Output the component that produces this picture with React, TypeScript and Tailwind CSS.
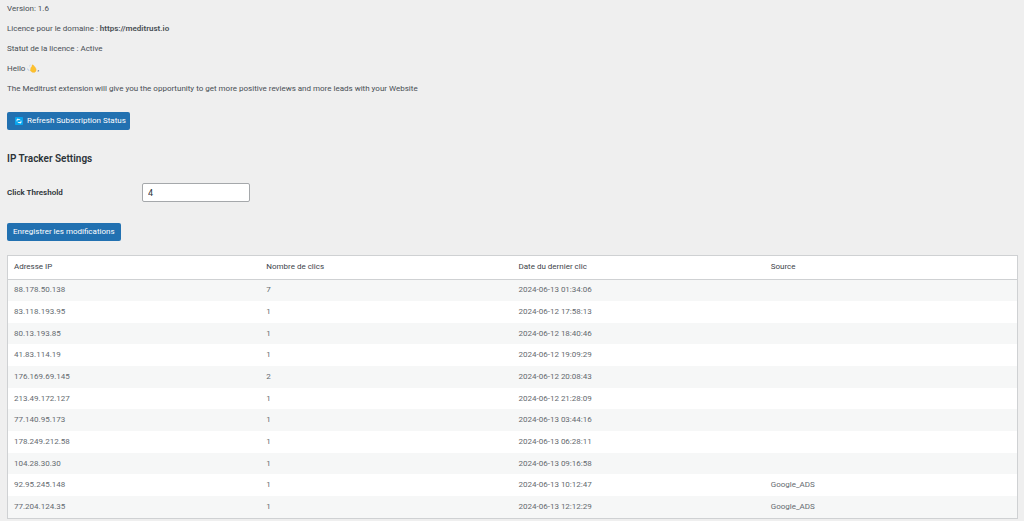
import { useState } from "react";

const clicks = [
  { ip: "88.178.50.138", count: 7, date: "2024-06-13 01:34:06", source: "" },
  { ip: "83.118.193.95", count: 1, date: "2024-06-12 17:58:13", source: "" },
  { ip: "80.13.193.85", count: 1, date: "2024-06-12 18:40:46", source: "" },
  { ip: "41.83.114.19", count: 1, date: "2024-06-12 19:09:29", source: "" },
  { ip: "176.169.69.145", count: 2, date: "2024-06-12 20:08:43", source: "" },
  { ip: "213.49.172.127", count: 1, date: "2024-06-12 21:28:09", source: "" },
  { ip: "77.140.95.173", count: 1, date: "2024-06-13 03:44:16", source: "" },
  { ip: "178.249.212.58", count: 1, date: "2024-06-13 06:28:11", source: "" },
  { ip: "104.28.30.30", count: 1, date: "2024-06-13 09:16:58", source: "" },
  { ip: "92.95.245.148", count: 1, date: "2024-06-13 10:12:47", source: "Google_ADS" },
  { ip: "77.204.124.35", count: 1, date: "2024-06-13 12:12:29", source: "Google_ADS" },
];

function WaveIcon() {
  return (
    <svg viewBox="0 0 10 9" className="inline-block h-[9px] w-[10px] align-middle" aria-hidden="true">
      <path d="M.4 4.6 1.8 6.6M2.4 2l1-.9" stroke="#9dbfe8" strokeWidth=".9" fill="none" />
      <path
        d="M3.8 3.8 4.8 2.6 5.2.8l1 .2 2 2.2 1 2-.2 2L7.4 8.4 5 8.2 3 6.2l.6-.8Z"
        fill="#fcc12e"
        stroke="#f8b133"
        strokeWidth=".3"
        strokeLinejoin="round"
      />
    </svg>
  );
}

function RefreshIcon() {
  return (
    <svg viewBox="0 0 8 8" className="h-2 w-2" aria-hidden="true">
      <rect width="8" height="8" rx=".8" fill="#08a5ee" />
      <path d="M2 4.4V2.6h3.2M6 3.6v1.9H2.8" stroke="#fff" strokeWidth=".8" fill="none" />
      <path d="M2.8 1.4 1.4 2.6h2.8ZM5.2 6.7 6.6 5.2H3.8Z" fill="#fff" />
    </svg>
  );
}

export default function App() {
  const [threshold, setThreshold] = useState("4");

  return (
    <main className="min-h-screen bg-[#efefef] pt-[3px] pr-[6px] pb-1 pl-[7px] font-[Roboto,sans-serif] text-[8px] leading-3 text-[#484e54]">
      <div className="flex flex-col gap-2">
        <p>Version: 1.6</p>
        <p>
          Licence pour le domaine : <strong className="font-semibold">https://meditrust.io</strong>
        </p>
        <p>Statut de la licence : Active</p>
        <p>
          Hello <WaveIcon />,
        </p>
        <p>
          The Meditrust extension will give you the opportunity to get more positive reviews and more leads with your
          Website
        </p>
      </div>

      <button
        type="button"
        className="mt-[17px] flex h-[18px] items-center gap-1 rounded-[2px] bg-[#2271b1] pr-1 pl-2 text-white"
      >
        <RefreshIcon />
        Refresh Subscription Status
      </button>

      <h2 className="mt-[21px] text-[10px] leading-4 font-semibold text-[#2c3338]">IP Tracker Settings</h2>

      <form onSubmit={(e) => e.preventDefault()}>
        <div className="mt-4 flex items-center">
          <label htmlFor="threshold" className="w-[135px] font-semibold text-[#2c3338]">
            Click Threshold
          </label>
          <input
            id="threshold"
            type="text"
            inputMode="numeric"
            value={threshold}
            onChange={(e) => setThreshold(e.target.value)}
            className="h-[19px] w-[108px] rounded-[2px] border border-[#a5a8ab] bg-white px-[5px] text-[9px] text-[#2c3338]"
          />
        </div>
        <button type="submit" className="mt-[21px] flex h-[18px] items-center rounded-[2px] bg-[#2271b1] px-[6px] text-white">
          Enregistrer les modifications
        </button>
      </form>

      <div className="mt-[14px] border border-[#cfd1d3] bg-white">
        <table className="w-full table-fixed border-collapse text-left">
          <thead>
            <tr className="h-[23px] border-b border-[#cfd1d3] text-[#3c434a]">
              <th className="px-[6px] font-normal">Adresse IP</th>
              <th className="px-[6px] font-normal">Nombre de clics</th>
              <th className="px-[6px] font-normal">Date du dernier clic</th>
              <th className="px-[6px] font-normal">Source</th>
            </tr>
          </thead>
          <tbody className="text-[#656a70]">
            {clicks.map((row) => (
              <tr key={row.ip} className="h-[22px] odd:bg-[#f6f7f7] nth-[3n]:h-[21px]">
                <td className="px-[6px]">{row.ip}</td>
                <td className="px-[6px]">{row.count}</td>
                <td className="px-[6px]">{row.date}</td>
                <td className="px-[6px]">{row.source}</td>
              </tr>
            ))}
          </tbody>
        </table>
      </div>
    </main>
  );
}
